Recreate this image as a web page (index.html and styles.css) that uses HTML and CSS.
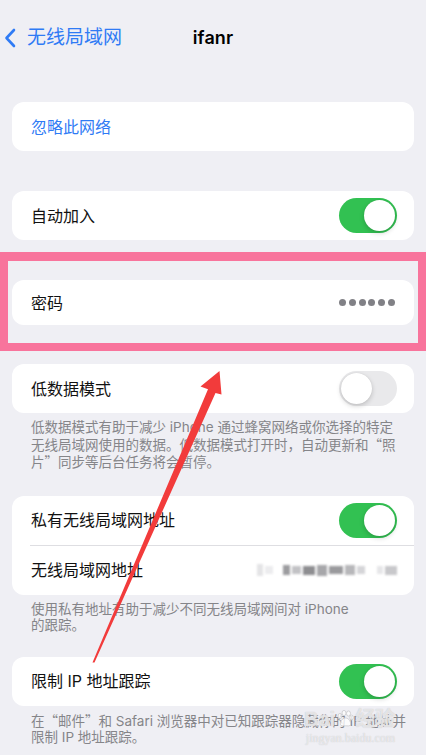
FILE: index.html
```html
<!DOCTYPE html>
<html lang="zh-CN">
<head>
<meta charset="utf-8">
<title>ifanr</title>
<link rel="stylesheet" href="styles.css">
</head>
<body>
<div class="page">
  <header class="nav">
    <a class="nav-back">
      <svg class="chevron" viewBox="0 0 12 20" width="12" height="20"><path d="M10 2 L2.5 10 L10 18" fill="none" stroke="currentColor" stroke-width="2.6" stroke-linecap="round" stroke-linejoin="round"/></svg>
      <span>无线局域网</span>
    </a>
    <h1 class="nav-title">ifanr</h1>
    <span></span>
  </header>

  <section class="card">
    <div class="row"><span class="link">忽略此网络</span></div>
  </section>

  <section class="card gap-lg">
    <div class="row"><span>自动加入</span><span class="toggle on"></span></div>
  </section>

  <section class="highlight">
    <div class="card inner">
      <div class="row short"><span>密码</span><span class="dots"><i></i><i></i><i></i><i></i><i></i><i></i></span></div>
    </div>
  </section>

  <section class="card gap-sm">
    <div class="row"><span>低数据模式</span><span class="toggle"></span></div>
  </section>
  <p class="note">低数据模式有助于减少 iPhone 通过蜂窝网络或你选择的特定<br>无线局域网使用的数据。低数据模式打开时，自动更新和<span class="q">“</span>照<br>片<span class="q">”</span>同步等后台任务将会暂停。</p>

  <section class="card gap-md">
    <div class="row"><span>私有无线局域网地址</span><span class="toggle on"></span></div>
    <div class="sep"></div>
    <div class="row"><span>无线局域网地址</span>
      <span class="mac"><i class="m1"></i><i class="m2"></i><i class="m3"></i><i class="m4"></i><i class="m5"></i><i class="m6"></i><i class="m7"></i><i class="m8"></i><i class="m9"></i><i class="m10"></i><i class="m11"></i></span>
    </div>
  </section>
  <p class="note">使用私有地址有助于减少不同无线局域网间对 iPhone<br>的跟踪。</p>

  <section class="card gap-last">
    <div class="row"><span>限制 IP 地址跟踪</span><span class="toggle on"></span></div>
  </section>
  <p class="note">在<span class="q">“</span>邮件<span class="q">”</span>和 Safari 浏览器中对已知跟踪器隐藏你的 IP 地址并<br>限制 IP 地址跟踪。</p>

  <svg class="arrow" viewBox="0 0 426 755" width="426" height="755">
    <polygon points="219.5,371 221.5,394.5 215.5,393 94.5,662.5 92.5,662.5 208,389.3 200.5,386.5" fill="#f23b3b"/>
  </svg>

  <div class="watermark">
    <span class="wm-top">Bai<svg class="paw" viewBox="0 0 18 18" width="18" height="18"><g fill="rgba(255,255,255,0.75)" stroke="#c9c9cc" stroke-width="0.8"><ellipse cx="4" cy="6" rx="2" ry="2.6"/><ellipse cx="8" cy="3" rx="2" ry="2.6"/><ellipse cx="12.5" cy="3.5" rx="2" ry="2.6"/><ellipse cx="15.5" cy="7.5" rx="1.8" ry="2.4"/><path d="M9.5 8 C6 8 4 12 4.5 14.5 C5 16.5 8 15.8 9.5 15.8 C11 15.8 14 16.5 14.5 14.5 C15 12 13 8 9.5 8 Z"/></g></svg>经验</span>
    <span class="wm-url">jingyan.baidu.com</span>
  </div>
</div>
</body>
</html>
```
FILE: styles.css
```css
* { box-sizing: border-box; }

html, body {
  margin: 0;
  padding: 0;
  background: #efeff4;
}

body {
  font-family: Inter, "Noto Sans CJK SC", sans-serif;
  color: #111;
  font-size: 16px;
}

.page {
  position: relative;
  width: 426px;
  height: 755px;
  overflow: hidden;
}

/* navigation bar */
.nav {
  display: grid;
  grid-template-columns: 1fr auto 1fr;
  align-items: center;
  padding-top: 27px;
  height: 49px;
}

.nav-back {
  display: flex;
  align-items: center;
  gap: 11px;
  padding-left: 4px;
  color: #2f7bf5;
  font-size: 19px;
  line-height: 22px;
}

.chevron { display: block; }

.nav-title {
  margin: 0;
  font-size: 18px;
  font-weight: 600;
  line-height: 22px;
  color: #000;
  letter-spacing: 0.1px;
}

/* grouped cards */
.card {
  margin: 53px 12px 0;
  background: #fff;
  border-radius: 12px;
  overflow: hidden;
}

.gap-lg { margin-top: 40px; }
.gap-sm { margin-top: 13px; }
.gap-md { margin-top: 25px; }
.gap-last { margin-top: 23px; }

.row {
  display: flex;
  align-items: center;
  justify-content: space-between;
  height: 49px;
  padding: 0 17px 0 19px;
  line-height: 20px;
}

.row.short { height: 45px; }

.link { color: #2f7bf5; }

.sep {
  height: 1px;
  margin-left: 18px;
  background: #dedee2;
}

/* annotated section around the password row */
.highlight {
  margin-top: 12px;
  border: 8px solid #f8749c;
  border-top-width: 9px;
  padding: 19px 4px 18px;
}

.highlight .card.inner { margin: 0; }

/* switches */
.toggle {
  position: relative;
  width: 58px;
  height: 35px;
  border-radius: 18px;
  background: #e9e9eb;
  flex: none;
}

.toggle::after {
  content: "";
  position: absolute;
  top: 2px;
  left: 2px;
  width: 31px;
  height: 31px;
  border-radius: 50%;
  background: #fff;
  box-shadow: 0 2px 5px rgba(0, 0, 0, 0.18), 0 0 1px rgba(0, 0, 0, 0.12);
}

.toggle.on { background: #32c152; }
.toggle.on::after { left: 25px; }

/* masked password */
.dots {
  display: flex;
  gap: 2.8px;
  margin-right: 2px;
}

.dots i {
  width: 7px;
  height: 7px;
  border-radius: 50%;
  background: #818186;
}

/* pixelated hardware address */
.mac {
  display: flex;
  align-items: center;
  gap: 2px;
  height: 14px;
  filter: blur(0.8px);
}

.mac i { display: block; height: 8px; }
.mac .m1 { width: 6px; background: #e4e4e6; height: 12px; }
.mac .m2 { width: 8px; background: #ececee; margin-right: 8px; }
.mac .m3 { width: 7px; background: #9c9c9f; height: 10px; }
.mac .m4 { width: 9px; background: #c2c2c5; }
.mac .m5 { width: 12px; background: #8e8e91; height: 9px; }
.mac .m6 { width: 10px; background: #a7a7aa; height: 11px; }
.mac .m7 { width: 14px; background: #9a9a9d; }
.mac .m8 { width: 10px; background: #b7b7ba; height: 10px; }
.mac .m9 { width: 8px; background: #d5d5d8; margin-right: 10px; }
.mac .m10 { width: 6px; background: #e6e6e8; }
.mac .m11 { width: 12px; background: #c8c8cb; height: 9px; }

/* section footers */
.note {
  margin: 0;
  padding: 6px 12px 0 31px;
  font-size: 13.5px;
  line-height: 16.5px;
  color: #858589;
  white-space: nowrap;
}

.q { font-family: "Noto Sans CJK SC", sans-serif; }

/* overlays */
.arrow {
  position: absolute;
  left: 0;
  top: 0;
  pointer-events: none;
}

.watermark {
  position: absolute;
  left: 304px;
  top: 708px;
  display: flex;
  flex-direction: column;
  align-items: flex-end;
  color: rgba(255, 255, 255, 0.6);
  font-family: "Liberation Serif", serif;
  text-shadow: 0 0 1px #b9b9bd;
  pointer-events: none;
}

.wm-top {
  display: flex;
  align-items: center;
  font-family: "Liberation Sans", "Noto Sans CJK SC", sans-serif;
  font-size: 20px;
  font-weight: 700;
  line-height: 22px;
}

.paw { margin: 0 1px; }

.wm-url {
  font-size: 12px;
  line-height: 14px;
  margin-top: 1px;
}
```
